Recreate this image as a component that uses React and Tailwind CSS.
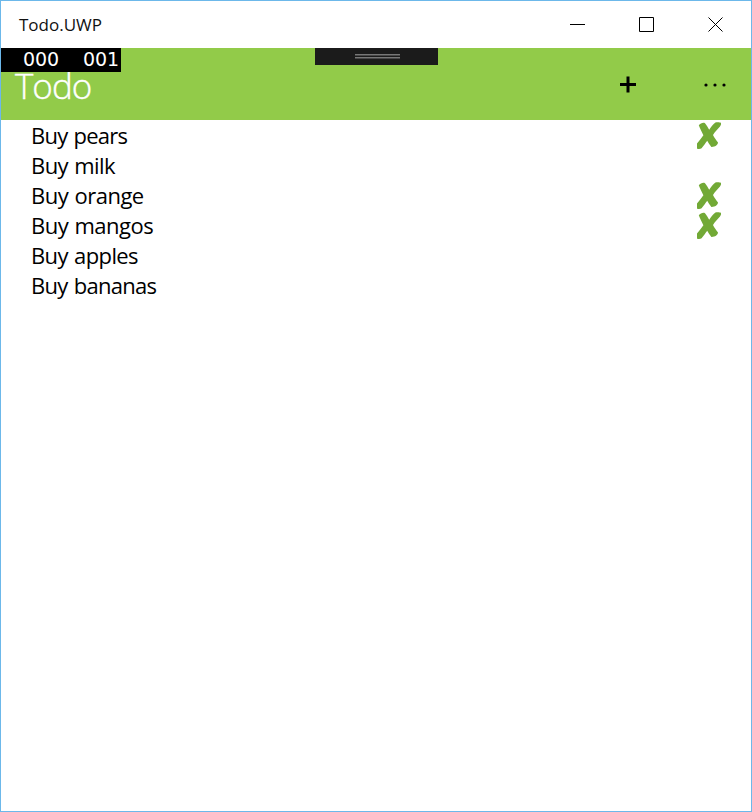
const items = [
  { name: 'Buy pears', done: true, spacing: 'tracking-[-0.75px]' },
  { name: 'Buy milk', done: false, spacing: 'tracking-[-0.55px]' },
  { name: 'Buy orange', done: true, spacing: 'tracking-[-0.5px]' },
  { name: 'Buy mangos', done: true, spacing: 'tracking-[-0.5px]' },
  { name: 'Buy apples', done: false, spacing: 'tracking-[-0.6px]' },
  { name: 'Buy bananas', done: false, spacing: 'tracking-[-0.7px]' },
];

function CrossMark() {
  return (
    <svg className="block h-[27px] w-6" viewBox="0 0 24 27" fill="#72a936">
      <path d="M1.8 3.2C3.4 1.2 6.4.2 8 1.2C9.6 3 10.8 5.2 12.2 7.8C14 4.8 16 2 18.4.4C20 0 22.8 0 23.8.7C24.4 1.9 24 3.2 22.8 4.8C20.4 7.4 17.8 10 16 13C17.2 15.6 19.2 18.2 21 20.6C20.8 23.4 17.6 25.2 14.4 25C12.6 22.8 11.2 20.8 10.2 18.8C8.4 21.2 6.8 23.8 4.6 26.2C3.4 27.2.8 27.2 0 26.4V21.4C2.4 18.6 4.6 16 6.4 13.2C4.8 10 3 6.6 1.8 3.2Z" />
    </svg>
  );
}

function TitleBar() {
  return (
    <div className="flex h-[47px] items-start justify-between pl-[18px] pr-[27px]">
      <span className="text-[17px] leading-[47px] text-[#111]">Todo.UWP</span>
      <svg className="mt-[15px] block h-4 w-[154px]" viewBox="0 0 154 16" fill="none" stroke="#000">
        <path d="M0 8.5H15M69.5 1.5H83.5V15.5H69.5Z" />
        <path d="M138.5 1.5L152.5 15.5M152.5 1.5L138.5 15.5" />
      </svg>
    </div>
  );
}

function Header() {
  return (
    <header className="relative flex h-[72px] items-start justify-between bg-[#92cb49] pl-[14px] pr-[25px]">
      <h1 className="mt-[23px] text-[35px] font-light leading-[30px] tracking-[-1px] text-white [-webkit-text-stroke:0.4px_white]">Todo</h1>
      <svg className="mt-7 block h-[18px] w-[106px]" viewBox="0 0 106 18">
        <path d="M0 8.5H16M8 .5V16.5" stroke="#000" strokeWidth="3" />
        <circle cx="86" cy="9" r="1.6" />
        <circle cx="95" cy="9" r="1.6" />
        <circle cx="104" cy="9" r="1.6" />
      </svg>
      <div className="absolute left-0 top-0 h-6 w-[120px] whitespace-pre bg-black pl-[22px] font-['DejaVu_Sans',sans-serif] text-[19px] leading-[23px] tracking-[-0.09px] text-white [word-spacing:6px]">000  001</div>
      <div className="absolute left-[314px] top-0 flex h-[17px] w-[123px] flex-col gap-px bg-[#1b1b1b] pl-10 pt-[6px]">
        <div className="h-[2px] w-[45px] border-b border-[#474747] bg-[#777]" />
        <div className="h-[2px] w-[45px] border-b border-[#474747] bg-[#777]" />
      </div>
    </header>
  );
}

export default function App() {
  return (
    <div className="h-[812px] w-[752px] overflow-hidden border border-[#6cb8ea] bg-white font-['Open_Sans',sans-serif] text-black">
      <TitleBar />
      <Header />
      <ul>
        {items.map((item) => (
          <li key={item.name} className="flex h-[30px] items-center justify-between pl-[30px] pr-[30px]">
            <span className={`text-[22px] leading-[30px] [word-spacing:1px] ${item.spacing}`}>{item.name}</span>
            {item.done && <CrossMark />}
          </li>
        ))}
      </ul>
    </div>
  );
}
